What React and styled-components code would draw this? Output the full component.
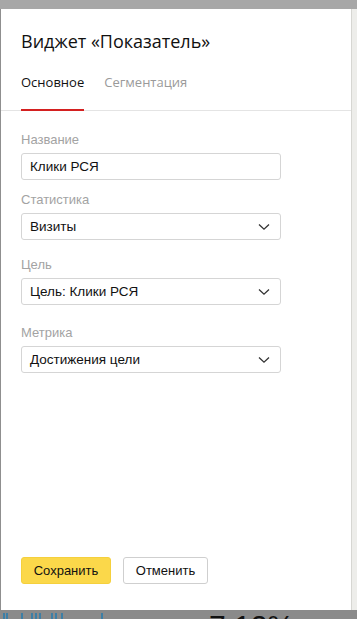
import React from 'react';
import styled, { createGlobalStyle } from 'styled-components';

const GlobalStyle = createGlobalStyle`
  html, body {
    margin: 0;
    padding: 0;
    background: #a9a9a9;
  }
  * {
    box-sizing: border-box;
  }
`;

const Screen = styled.div`
  width: 357px;
  height: 619px;
  display: grid;
  grid-template-rows: 9px 1fr 9px;
  overflow: hidden;
`;

const TopShade = styled.div`
  background: #a7a7a7;
`;

const Middle = styled.div`
  display: grid;
  grid-template-columns: 1px 350px 1px 1fr;
`;

const EdgeLine = styled.div`
  background: ${({ light }) => (light ? '#d6d6d2' : '#8f8f8f')};
`;

const SideStrip = styled.div`
  background: #ededea;
`;

const BottomShade = styled.div`
  background: #8a8a8a;
  display: flex;
  align-items: flex-start;
  overflow: hidden;
`;

const Bars = styled.svg`
  display: block;
  margin-left: 1px;
  margin-top: 2px;
`;

const BigNumber = styled.div`
  margin-left: 88px;
  margin-top: 1px;
  font-family: 'Liberation Sans', Arial, sans-serif;
  font-size: 30px;
  line-height: 30px;
  color: #111;
`;

const Modal = styled.div`
  background: #ffffff;
  display: flex;
  flex-direction: column;
  font-family: 'Liberation Sans', Arial, sans-serif;
`;

const Title = styled.h1`
  margin: 0;
  padding: 20px 0 0 20px;
  font-family: 'Open Sans', sans-serif;
  font-weight: 400;
  font-size: 18px;
  line-height: 24px;
  color: #111;
`;

const Tabs = styled.div`
  display: flex;
  gap: 20px;
  padding: 0 20px;
  margin-top: 20px;
  border-bottom: 1px solid #e4e4e4;
`;

const Tab = styled.div`
  font-family: 'Open Sans', sans-serif;
  font-size: 13px;
  line-height: 18px;
  padding-bottom: 18px;
  color: ${({ active }) => (active ? '#111' : '#9a9a9a')};
  border-bottom: 2px solid ${({ active }) => (active ? '#d42020' : 'transparent')};
  margin-bottom: -1px;
`;

const Form = styled.div`
  display: flex;
  flex-direction: column;
  padding: 21px 20px 0;
`;

const Field = styled.div`
  display: flex;
  flex-direction: column;
  margin-bottom: ${({ gap }) => gap}px;
`;

const Label = styled.div`
  font-size: 13px;
  line-height: 16px;
  color: #a3a3a3;
  margin-bottom: 5px;
`;

const Box = styled.div`
  width: 260px;
  height: 27px;
  border: 1px solid #d5d5d5;
  border-radius: 3px;
  display: flex;
  align-items: center;
  justify-content: space-between;
  padding: 0 10px 0 8px;
  font-size: 13.5px;
  color: #111;
`;

const Chevron = () => (
  <svg width="12" height="8" viewBox="0 0 12 8">
    <path d="M1 1.5 L6 6.2 L11 1.5" fill="none" stroke="#333" strokeWidth="1.3" />
  </svg>
);

const Spacer = styled.div`
  flex: 1;
`;

const Actions = styled.div`
  display: flex;
  gap: 12px;
  padding: 0 20px 26px;
`;

const Button = styled.button`
  height: 27px;
  padding: 0;
  border-radius: 3px;
  font-family: 'Liberation Sans', Arial, sans-serif;
  font-size: 13px;
  color: #111;
  background: ${({ primary }) => (primary ? '#fbd84a' : '#fff')};
  border: 1px solid ${({ primary }) => (primary ? '#f5d03d' : '#cfcfcf')};
  width: ${({ w }) => w}px;
`;

const fields = [
  { label: 'Название', value: 'Клики РСЯ', select: false, gap: 12 },
  { label: 'Статистика', value: 'Визиты', select: true, gap: 17 },
  { label: 'Цель', value: 'Цель: Клики РСЯ', select: true, gap: 20 },
  { label: 'Метрика', value: 'Достижения цели', select: true, gap: 0 },
];

export default function App() {
  return (
    <>
      <GlobalStyle />
      <Screen>
        <TopShade />
        <Middle>
          <EdgeLine />
          <Modal>
            <Title>Виджет «Показатель»</Title>
            <Tabs>
              <Tab active>Основное</Tab>
              <Tab>Сегментация</Tab>
            </Tabs>
            <Form>
              {fields.map((f) => (
                <Field key={f.label} gap={f.gap}>
                  <Label>{f.label}</Label>
                  <Box>
                    <span>{f.value}</span>
                    {f.select && <Chevron />}
                  </Box>
                </Field>
              ))}
            </Form>
            <Spacer />
            <Actions>
              <Button primary w={90}>Сохранить</Button>
              <Button w={85}>Отменить</Button>
            </Actions>
          </Modal>
          <EdgeLine light />
          <SideStrip />
        </Middle>
        <BottomShade>
          <Bars width="120" height="7" viewBox="0 0 120 7">
            {[2, 5, 20, 30, 34, 38, 50, 54, 60, 100].map((x) => (
              <rect key={x} x={x} y="1" width="2" height="6" fill="#3d7fa6" />
            ))}
          </Bars>
          <BigNumber>7,12%</BigNumber>
        </BottomShade>
      </Screen>
    </>
  );
}
